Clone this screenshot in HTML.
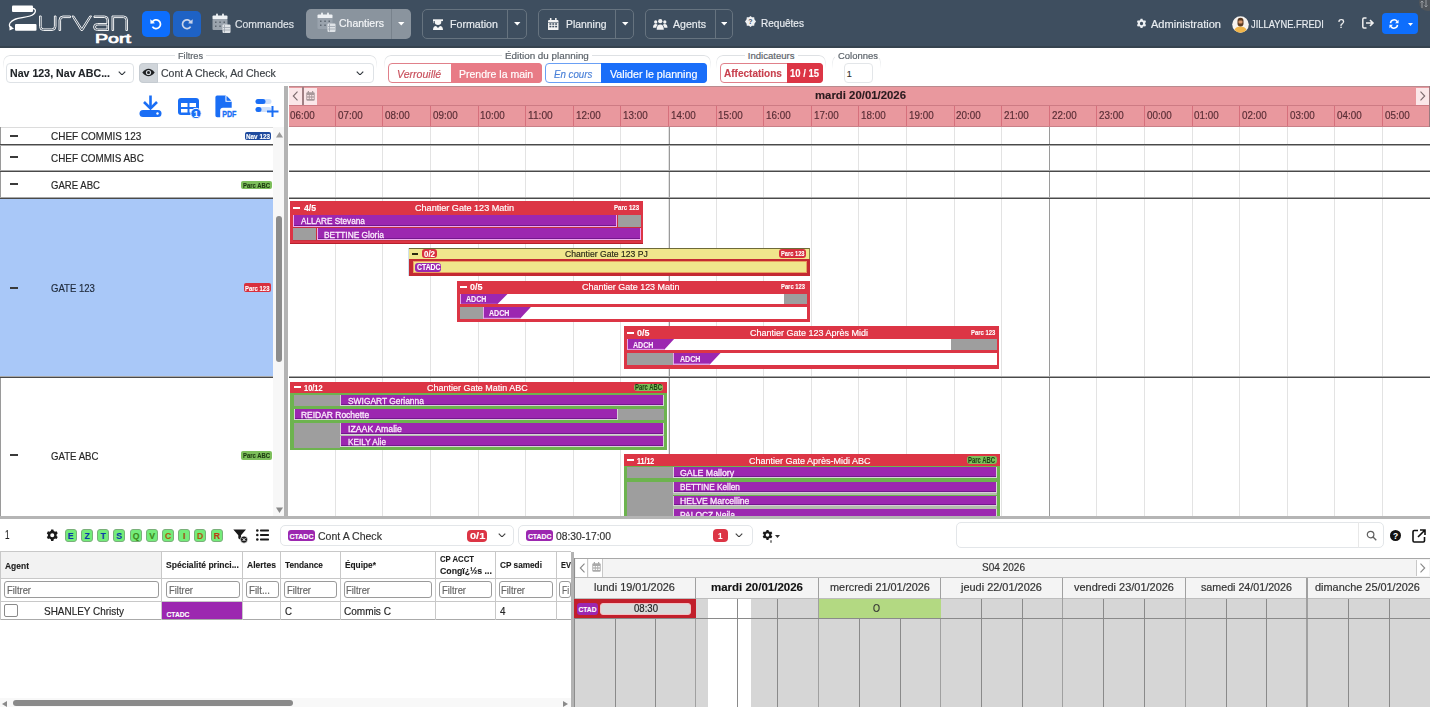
<!DOCTYPE html><html><head><meta charset="utf-8"><style>
html,body{margin:0;padding:0;width:1430px;height:707px;overflow:hidden;background:#fff;font-family:"Liberation Sans",sans-serif;}
#r{position:relative;width:1430px;height:707px;overflow:hidden;}
#r div{position:absolute;box-sizing:border-box;}
#r svg{position:absolute;}
.t{white-space:nowrap;-webkit-text-stroke:0.18px currentColor;}
</style></head><body><div id="r">
<div style="left:0px;top:0px;width:1430px;height:48px;background:#3e4e5f;"></div>
<div style="left:0px;top:46px;width:1430px;height:2px;background:#36434f;"></div>
<svg style="left:4px;top:2px" width="132" height="44" viewBox="0 0 132 44">
<rect x="8" y="3.5" width="21" height="6.5" rx="1" fill="#fff"/>
<rect x="11" y="22" width="21.5" height="6.8" rx="1" fill="#fff"/>
<path d="M29 6.5 C33 7 32 12 26 14 C18 16.5 10 15 6 21 C4.5 24 6 25.5 8 25.5" stroke="#fff" stroke-width="1.3" fill="none"/>
<path d="M5.5 23.5 L10 26.5 L5.5 28.5 Z" fill="#fff"/>
<g stroke="#fff" stroke-width="0.9" fill="none">
<path d="M35.5 14 v10.5 q0 4 4 4 h8.5 q4 0 4 -4 v-10.5 h-1.6 v10.3 q0 2.6 -2.6 2.6 h-8 q-2.6 0 -2.6 -2.6 v-10.3 z"/>
<path d="M55 28.5 v-10.5 q0 -4 4 -4 h7.5 v1.6 h-7.3 q-2.6 0 -2.6 2.6 v10.3 z"/>
<path d="M68 14 h1.8 l8 12.5 l8 -12.5 h1.8 l-9 14.5 h-1.6 z"/>
<path d="M90 14 h10.5 q4 0 4 4 v10.5 h-11 q-4 0 -4 -3.5 q0 -3.5 4 -3.5 h9.4 v-3.4 q0 -2.6 -2.6 -2.6 h-10.3 z M103 23 h-9 q-2.5 0 -2.5 2 q0 2 2.5 2 h9 z"/>
<path d="M108 28.5 v-14.5 h11.5 q4 0 4 4 v10.5 h-1.6 v-10.3 q0 -2.6 -2.6 -2.6 h-9.7 v12.9 z"/>
</g>
<text x="91" y="40.6" font-family="Liberation Sans" font-size="12.8" fill="#fff" stroke="#fff" stroke-width="0.7" textLength="36" lengthAdjust="spacingAndGlyphs">Port</text>
</svg>
<div style="left:142px;top:11px;width:28px;height:26px;background:#0d6efd;border-radius:5px;"></div>
<div style="left:173px;top:11px;width:28px;height:26px;background:#1e62c5;border-radius:5px;"></div>
<svg style="left:148px;top:16px" width="16" height="16" viewBox="0 0 16 16"><path d="M4.2 6.2 A4.4 4.4 0 1 1 4.4 10.6" stroke="#fff" stroke-width="1.7" fill="none"/><path d="M2.3 3.2 L2.5 7.8 L7 7.2 Z" fill="#fff"/></svg>
<svg style="left:179px;top:16px" width="16" height="16" viewBox="0 0 16 16"><path d="M11.8 6.2 A4.4 4.4 0 1 0 11.6 10.6" stroke="#c9d4ea" stroke-width="1.7" fill="none"/><path d="M13.7 3.2 L13.5 7.8 L9 7.2 Z" fill="#c9d4ea"/></svg>
<svg style="left:212px;top:13px" width="20" height="21" viewBox="0 0 20 21">
<rect x="4" y="0.5" width="2" height="3" rx="1" fill="#e8ecef"/><rect x="10" y="0.5" width="2" height="3" rx="1" fill="#e8ecef"/>
<rect x="0.5" y="2.5" width="15" height="4" rx="1" fill="#eef1f4"/>
<rect x="0.5" y="6" width="15" height="11" rx="1" fill="#9aa3ad"/>
<g fill="#5d6670"><rect x="3" y="8.5" width="1.5" height="1.5"/><rect x="7.3" y="8.5" width="1.5" height="1.5"/><rect x="11.5" y="8.5" width="1.5" height="1.5"/><rect x="3" y="12.5" width="1.5" height="1.5"/><rect x="7.3" y="12.5" width="1.5" height="1.5"/></g>
<rect x="10.5" y="11.5" width="8" height="8.5" rx="1" fill="#dfe3e7"/><g stroke="#9aa3ad" stroke-width="0.8"><line x1="12.5" y1="12" x2="12.5" y2="19.5"/><line x1="11" y1="14.5" x2="18" y2="14.5"/><line x1="11" y1="17" x2="18" y2="17"/></g>
</svg>
<div class="t" style="left:235px;top:18.5px;font-size:11.594px;line-height:11.594px;color:#dfe4e9;transform:scaleX(0.8977);transform-origin:0 0;">Commandes</div>
<div style="left:306px;top:9px;width:105px;height:29.5px;background:#8a949e;border-radius:5px;"></div>
<div style="left:391px;top:9px;width:1px;height:29.5px;background:#78828c;"></div>
<svg style="left:317px;top:12px" width="20" height="21" viewBox="0 0 20 21">
<rect x="4" y="0.5" width="2" height="3" rx="1" fill="#e8ecef"/><rect x="10" y="0.5" width="2" height="3" rx="1" fill="#e8ecef"/>
<rect x="0.5" y="2.5" width="15" height="4" rx="1" fill="#eef1f4"/>
<rect x="0.5" y="6" width="15" height="11" rx="1" fill="#9aa3ad"/>
<g fill="#5d6670"><rect x="3" y="8.5" width="1.5" height="1.5"/><rect x="7.3" y="8.5" width="1.5" height="1.5"/><rect x="11.5" y="8.5" width="1.5" height="1.5"/><rect x="3" y="12.5" width="1.5" height="1.5"/><rect x="7.3" y="12.5" width="1.5" height="1.5"/></g>
<rect x="10.5" y="11.5" width="8" height="8.5" rx="1" fill="#dfe3e7"/><g stroke="#9aa3ad" stroke-width="0.8"><line x1="12.5" y1="12" x2="12.5" y2="19.5"/><line x1="11" y1="14.5" x2="18" y2="14.5"/><line x1="11" y1="17" x2="18" y2="17"/></g>
</svg>
<div class="t" style="left:339px;top:18.31px;font-size:11.594px;line-height:11.594px;color:#f4f6f8;transform:scaleX(0.9069);transform-origin:0 0;">Chantiers</div>
<svg style="left:398px;top:21.5px" width="6.5" height="4" viewBox="0 0 8 5"><path d="M0 0 H8 L4 4.5 Z" fill="#fff"/></svg>
<div style="left:422px;top:9px;width:105px;height:29.5px;border:1px solid #66737f;border-radius:5px;"></div>
<div style="left:507px;top:9px;width:1px;height:29.5px;background:#66737f;"></div>
<svg style="left:432.8px;top:18.9px" width="10" height="11.5" viewBox="0 0 10 11.5"><path d="M0 0.3 H10 V2.1 H0 Z" fill="#f5f5f5"/><path d="M0.4 2 V4.2" stroke="#f5f5f5" stroke-width="0.6"/><path d="M1.8 2 v1.6 q0 2.4 3.2 2.4 q3.2 0 3.2 -2.4 V2 Z" fill="#f5f5f5"/><path d="M0 11.3 q0 -4 3 -4.2 L5 9 L7 7.1 q3 0.2 3 4.2 Z" fill="#f5f5f5"/></svg>
<div class="t" style="left:450px;top:18.81px;font-size:11.594px;line-height:11.594px;color:#e9edf1;transform:scaleX(0.9197);transform-origin:0 0;">Formation</div>
<svg style="left:514px;top:21.5px" width="6.5" height="4" viewBox="0 0 8 5"><path d="M0 0 H8 L4 4.5 Z" fill="#fff"/></svg>
<div style="left:537.7px;top:9px;width:96.3px;height:29.5px;border:1px solid #66737f;border-radius:5px;"></div>
<div style="left:615px;top:9px;width:1px;height:29.5px;background:#66737f;"></div>
<svg style="left:548px;top:18px" width="10.5" height="12.4" viewBox="0 0 11 13"><rect x="2" y="0" width="1.6" height="3" fill="#f3f3f3"/><rect x="7.4" y="0" width="1.6" height="3" fill="#f3f3f3"/><rect x="0" y="2" width="11" height="11" rx="1.2" fill="#f3f3f3"/><g fill="#3e4e5f"><rect x="1.5" y="5.5" width="2" height="1.6"/><rect x="4.5" y="5.5" width="2" height="1.6"/><rect x="7.5" y="5.5" width="2" height="1.6"/><rect x="1.5" y="8.2" width="2" height="1.6"/><rect x="4.5" y="8.2" width="2" height="1.6"/><rect x="7.5" y="8.2" width="2" height="1.6"/><rect x="0" y="4.3" width="11" height="0.6"/></g></svg>
<div class="t" style="left:565.5px;top:18.81px;font-size:11.594px;line-height:11.594px;color:#e9edf1;transform:scaleX(0.8975);transform-origin:0 0;">Planning</div>
<svg style="left:622px;top:21.5px" width="6.5" height="4" viewBox="0 0 8 5"><path d="M0 0 H8 L4 4.5 Z" fill="#fff"/></svg>
<div style="left:644.6px;top:9px;width:88.9px;height:29.5px;border:1px solid #66737f;border-radius:5px;"></div>
<div style="left:714.6px;top:9px;width:1.0px;height:29.5px;background:#66737f;"></div>
<svg style="left:653px;top:18.8px" width="14.5" height="10.8" viewBox="0 0 15 11"><g fill="#f3f3f3"><circle cx="7.5" cy="2.2" r="2.2"/><circle cx="2.8" cy="3" r="1.7"/><circle cx="12.2" cy="3" r="1.7"/><path d="M3.8 11 q0 -5.5 3.7 -5.5 q3.7 0 3.7 5.5 z"/><path d="M0 9 q0 -4 2.8 -4 q1.5 0 2 1 q-1.5 1.2 -1.5 3 z"/><path d="M15 9 q0 -4 -2.8 -4 q-1.5 0 -2 1 q1.5 1.2 1.5 3 z"/></g></svg>
<div class="t" style="left:673px;top:18.81px;font-size:11.594px;line-height:11.594px;color:#e9edf1;transform:scaleX(0.9142);transform-origin:0 0;">Agents</div>
<svg style="left:720.5px;top:21.5px" width="6.5" height="4" viewBox="0 0 8 5"><path d="M0 0 H8 L4 4.5 Z" fill="#fff"/></svg>
<svg style="left:745px;top:16px" width="11" height="11" viewBox="0 0 11 11"><path d="M5.5 0 L7 1.3 L9.2 1.3 L9.4 3.3 L11 5.5 L9.4 7.7 L9.2 9.7 L7 9.7 L5.5 11 L4 9.7 L1.8 9.7 L1.6 7.7 L0 5.5 L1.6 3.3 L1.8 1.3 L4 1.3 Z" fill="#eef0f2"/><text x="5.5" y="8.3" font-size="7" font-weight="bold" text-anchor="middle" fill="#3e4e5f" font-family="Liberation Sans">?</text></svg>
<div class="t" style="left:761.2px;top:17.5px;font-size:11.594px;line-height:11.594px;color:#e9edf1;transform:scaleX(0.8664);transform-origin:0 0;">Requêtes</div>
<svg style="left:1136px;top:18px" width="11" height="11" viewBox="0 0 16 16"><path fill="#eceff2" d="M9.4 1.1 9.9 3a5.3 5.3 0 0 1 1.5.9l1.9-.6 1.4 2.4-1.4 1.3a5.4 5.4 0 0 1 0 1.8l1.4 1.3-1.4 2.4-1.9-.6a5.3 5.3 0 0 1-1.5.9l-.5 1.9H6.6l-.5-1.9a5.3 5.3 0 0 1-1.5-.9l-1.9.6L1.3 10.1l1.4-1.3a5.4 5.4 0 0 1 0-1.8L1.3 5.7l1.4-2.4 1.9.6A5.3 5.3 0 0 1 6.1 3l.5-1.9zM8 5.6a2.4 2.4 0 1 0 0 4.8 2.4 2.4 0 0 0 0-4.8z"/></svg>
<div class="t" style="left:1151px;top:18.81px;font-size:11.304px;line-height:11.304px;color:#e9edf1;transform:scaleX(0.9774);transform-origin:0 0;">Administration</div>
<svg style="left:1232px;top:16px" width="17" height="17" viewBox="0 0 17 17"><circle cx="8.5" cy="8.5" r="8.3" fill="#f7f3ee"/><path d="M2.5 14 q1 -3.5 6 -3.5 q5 0 6 3.5 q-2.5 2.8 -6 2.8 q-3.5 0 -6 -2.8z" fill="#f0b54a"/><path d="M5.5 5 q0 -3.2 3 -3.2 q3 0 3 3.2 v2.5 q0 3 -3 3 q-3 0 -3 -3z" fill="#5a3a22"/><rect x="6.5" y="4.5" width="4" height="3" rx="1" fill="#d9986a"/></svg>
<div class="t" style="left:1251px;top:18.81px;font-size:11.304px;line-height:11.304px;color:#e9edf1;transform:scaleX(0.8261);transform-origin:0 0;">JILLAYNE.FREDI</div>
<div class="t" style="left:1338.3px;top:17.31px;font-size:13.043px;line-height:13.043px;color:#f3f3f3;transform:scaleX(0.8961);transform-origin:0 0;">?</div>
<svg style="left:1362px;top:17px" width="13" height="12" viewBox="0 0 13 12"><path d="M4.5 1 H2 q-1.2 0 -1.2 1.2 v7.6 q0 1.2 1.2 1.2 H4.5" stroke="#f0f0f0" stroke-width="1.5" fill="none"/><path d="M4 6 H10.5 M8 3 L11 6 L8 9" stroke="#f0f0f0" stroke-width="1.6" fill="none"/></svg>
<div style="left:1382px;top:13.4px;width:36px;height:20.6px;background:#0d6efd;border-radius:4px;"></div>
<svg style="left:1389px;top:19px" width="10" height="10" viewBox="0 0 12 12"><path d="M1.8 5 A4.3 4.3 0 0 1 9.8 3.2" stroke="#fff" stroke-width="1.8" fill="none"/><path d="M10.2 7 A4.3 4.3 0 0 1 2.2 8.8" stroke="#fff" stroke-width="1.8" fill="none"/><path d="M11.5 0.8 V5 H7.3 Z" fill="#fff"/><path d="M0.5 11.2 V7 H4.7 Z" fill="#fff"/></svg>
<svg style="left:1408px;top:22.5px" width="5" height="3" viewBox="0 0 5 3"><path d="M0 0 H5 L2.5 3 Z" fill="#fff"/></svg>
<svg style="left:1418px;top:0px" width="12" height="12" viewBox="0 0 12 12"><circle cx="9.5" cy="2.5" r="8.5" fill="#50555b"/><path d="M4 1 V8 M2.5 2.5 L4 1 L5.5 2.5 M8 0 V7 M6.5 5.5 L8 7 L9.5 5.5" stroke="#9a9ea3" stroke-width="1" fill="none"/></svg>
<div style="left:2.5px;top:54.5px;width:374.5px;height:14px;border:1px solid #dde0e3;border-bottom:none;border-radius:7px 7px 0 0;-webkit-mask-image:linear-gradient(#000,transparent);"></div>
<div style="left:174.6px;top:52.5px;width:31.1px;height:5.0px;background:#fff;"></div>
<div class="t" style="left:177.6px;top:50.51px;font-size:9.565px;line-height:9.565px;color:#5c636a;transform:scaleX(0.964);transform-origin:0 0;">Filtres</div>
<div style="left:384.4px;top:54.5px;width:326.6px;height:14px;border:1px solid #dde0e3;border-bottom:none;border-radius:7px 7px 0 0;-webkit-mask-image:linear-gradient(#000,transparent);"></div>
<div style="left:502px;top:52.5px;width:90px;height:5.0px;background:#fff;"></div>
<div class="t" style="left:505px;top:50.51px;font-size:9.565px;line-height:9.565px;color:#5c636a;transform:scaleX(1.0323);transform-origin:0 0;">Édition du planning</div>
<div style="left:715.7px;top:54.5px;width:110.79999999999995px;height:14px;border:1px solid #dde0e3;border-bottom:none;border-radius:7px 7px 0 0;-webkit-mask-image:linear-gradient(#000,transparent);"></div>
<div style="left:744.8px;top:52.5px;width:52.9px;height:5.0px;background:#fff;"></div>
<div class="t" style="left:747.8px;top:50.51px;font-size:9.565px;line-height:9.565px;color:#5c636a;">Indicateurs</div>
<div style="left:831.6px;top:54.5px;width:49.39999999999998px;height:14px;border:1px solid #dde0e3;border-bottom:none;border-radius:7px 7px 0 0;-webkit-mask-image:linear-gradient(#000,transparent);"></div>
<div style="left:835px;top:52.5px;width:46px;height:5.0px;background:#fff;"></div>
<div class="t" style="left:838px;top:50.51px;font-size:9.565px;line-height:9.565px;color:#5c636a;transform:scaleX(0.9898);transform-origin:0 0;">Colonnes</div>
<div style="left:6.4px;top:63px;width:127.6px;height:19.5px;border:1px solid #dee2e6;border-radius:4px;background:#fff;"></div>
<div class="t" style="left:9.5px;top:68.01px;font-size:10.58px;line-height:10.58px;color:#212529;transform:scaleX(1.0043);transform-origin:0 0;font-weight:bold;-webkit-text-stroke:0.12px currentColor;">Nav 123, Nav ABC...</div>
<svg style="left:118px;top:70.5px" width="8" height="4.8" viewBox="0 0 8 5"><path d="M0.6 0.6 L4 4 L7.4 0.6" stroke="#343a40" stroke-width="1.2" fill="none"/></svg>
<div style="left:138.7px;top:63px;width:235.3px;height:19.5px;border:1px solid #dee2e6;border-radius:4px;background:#fff;"></div>
<div style="left:138.7px;top:63px;width:19.8px;height:19.5px;background:#d0d5da;border:1px solid #c5cbd1;border-radius:4px 0 0 4px;"></div>
<svg style="left:142px;top:68px" width="13" height="9" viewBox="0 0 13 9"><path d="M0.3 4.5 Q6.5 -3 12.7 4.5 Q6.5 12 0.3 4.5Z" fill="#1d1f21"/><circle cx="6.5" cy="4.5" r="2.6" fill="#d0d5da"/><circle cx="6.5" cy="4.5" r="1.5" fill="#1d1f21"/></svg>
<div class="t" style="left:161px;top:68.01px;font-size:11.014px;line-height:11.014px;color:#3a3f44;transform:scaleX(0.9583);transform-origin:0 0;">Cont A Check, Ad Check</div>
<svg style="left:356px;top:70.5px" width="8" height="4.8" viewBox="0 0 8 5"><path d="M0.6 0.6 L4 4 L7.4 0.6" stroke="#343a40" stroke-width="1.2" fill="none"/></svg>
<div style="left:387.8px;top:63.3px;width:154.0px;height:19.5px;border:1px solid #e0808a;border-radius:4px;background:#fff;"></div>
<div style="left:450.5px;top:63.3px;width:91.3px;height:19.5px;background:#e87b86;border-radius:0 4px 4px 0;"></div>
<div class="t" style="left:397px;top:68.71px;font-size:11.014px;line-height:11.014px;color:#c9505d;transform:scaleX(0.9606);transform-origin:0 0;font-style:italic;">Verrouillé</div>
<div class="t" style="left:458.7px;top:68.71px;font-size:11.014px;line-height:11.014px;color:#fff;transform:scaleX(0.9556);transform-origin:0 0;">Prendre la main</div>
<div style="left:545px;top:63.3px;width:162px;height:19.5px;border:1px solid #6aa0f5;border-radius:4px;background:#fff;"></div>
<div style="left:601px;top:63.3px;width:106px;height:19.5px;background:#1a6ef9;border-radius:0 4px 4px 0;"></div>
<div class="t" style="left:553.9px;top:68.71px;font-size:11.014px;line-height:11.014px;color:#4a80d8;transform:scaleX(0.8835);transform-origin:0 0;font-style:italic;">En cours</div>
<div class="t" style="left:609.9px;top:68.71px;font-size:11.014px;line-height:11.014px;color:#fff;transform:scaleX(0.9743);transform-origin:0 0;">Valider le planning</div>
<div style="left:719.5px;top:63.3px;width:103.3px;height:19.5px;border:1px solid #e0808a;border-radius:4px;background:#fff;"></div>
<div style="left:786.6px;top:63.3px;width:36.2px;height:19.5px;background:#dc3545;border-radius:0 4px 4px 0;"></div>
<div class="t" style="left:723.9px;top:68.31px;font-size:10.87px;line-height:10.87px;color:#c8404e;transform:scaleX(0.9234);transform-origin:0 0;font-weight:bold;-webkit-text-stroke:0.12px currentColor;">Affectations</div>
<div class="t" style="left:790px;top:68.31px;font-size:10.58px;line-height:10.58px;color:#fff;transform:scaleX(0.8963);transform-origin:0 0;font-weight:bold;-webkit-text-stroke:0.12px currentColor;">10 / 15</div>
<div style="left:843.5px;top:63px;width:29.0px;height:19.5px;border:1px solid #e3e6e9;border-radius:4px;background:#fff;"></div>
<div class="t" style="left:846.7px;top:70.01px;font-size:8.99px;line-height:8.99px;color:#333;">1</div>
<svg style="left:139px;top:95px" width="23" height="23" viewBox="0 0 23 23"><path d="M11.5 0.5 V12" stroke="#1a6ef5" stroke-width="2.6"/><path d="M5 7 L11.5 13.5 L18 7" stroke="#1a6ef5" stroke-width="2.6" fill="none"/><rect x="0.5" y="15" width="22" height="7" rx="3.5" fill="#1a6ef5"/><circle cx="18.5" cy="18.5" r="1.2" fill="#fff"/></svg>
<svg style="left:177px;top:97px" width="25" height="22" viewBox="0 0 25 22"><rect x="1" y="1" width="21" height="17" rx="3" fill="#1a6ef5"/><g fill="#fff"><rect x="4" y="6" width="6.5" height="4"/><rect x="12.5" y="6" width="6.5" height="4"/><rect x="4" y="12" width="6.5" height="3.5"/><rect x="12.5" y="12" width="4" height="3.5"/></g><circle cx="19" cy="16.5" r="5.2" fill="#1a6ef5" stroke="#fff" stroke-width="1"/><text x="19" y="19.8" font-size="8.5" font-weight="bold" fill="#fff" text-anchor="middle" font-family="Liberation Sans">1</text></svg>
<svg style="left:215px;top:95px" width="23" height="23" viewBox="0 0 23 23"><path d="M0.4 2.2 q0-1.7 1.7-1.7 H10.8 L16.7 6.5 V12.7 H8 q-2.8 0 -2.8 2.8 V22.3 H2.1 q-1.7 0 -1.7-1.7 Z" fill="#1a6ef5"/><path d="M11 0.5 V6.3 H16.8" stroke="#fff" stroke-width="1.1" fill="none"/><path d="M11.8 1 L16.2 5.4 H11.8 Z" fill="#1a6ef5"/><text x="7.2" y="21.9" font-size="8.8" font-weight="bold" fill="#1a6ef5" stroke="#1a6ef5" stroke-width="0.35" font-family="Liberation Sans" textLength="14.2" lengthAdjust="spacingAndGlyphs">PDF</text></svg>
<svg style="left:255px;top:98px" width="25" height="20" viewBox="0 0 25 20"><rect x="0.5" y="1" width="16" height="5" rx="2.5" fill="#cfe0fb"/><rect x="0.5" y="1" width="10" height="5" rx="2.5" fill="#1a6ef5"/><rect x="0.5" y="9" width="16" height="5" rx="2.5" fill="#cfe0fb"/><rect x="0.5" y="9" width="6" height="5" rx="2.5" fill="#1a6ef5"/><path d="M17.5 8 V19 M12 13.5 H23.5" stroke="#1a6ef5" stroke-width="2"/></svg>
<div style="left:0px;top:126.5px;width:273px;height:1.0px;background:#dcdcdc;"></div>
<div style="left:0px;top:127px;width:1.2px;height:389px;background:#9a9a9a;"></div>
<div style="left:0px;top:198.5px;width:273px;height:179.0px;background:#a9c8f8;"></div>
<div style="left:0px;top:144px;width:273px;height:1px;background:#4a4a4a;"></div>
<div style="left:0px;top:145px;width:273px;height:1px;background:#a8a8a8;"></div>
<div style="left:0px;top:171px;width:273px;height:1px;background:#4a4a4a;"></div>
<div style="left:0px;top:170px;width:273px;height:1px;background:#a8a8a8;"></div>
<div style="left:0px;top:198px;width:273px;height:1px;background:#4a4a4a;"></div>
<div style="left:0px;top:197px;width:273px;height:1px;background:#a8a8a8;"></div>
<div style="left:0px;top:377px;width:273px;height:1px;background:#4a4a4a;"></div>
<div style="left:0px;top:376px;width:273px;height:1px;background:#a8a8a8;"></div>
<div style="left:10px;top:135px;width:8px;height:2px;background:#3a3a3a;"></div>
<div style="left:10px;top:156px;width:8px;height:2px;background:#3a3a3a;"></div>
<div style="left:10px;top:183px;width:8px;height:2px;background:#3a3a3a;"></div>
<div style="left:10px;top:287px;width:8px;height:2px;background:#3a3a3a;"></div>
<div style="left:10px;top:454px;width:8px;height:2px;background:#3a3a3a;"></div>
<div class="t" style="left:51px;top:130.91px;font-size:11.159px;line-height:11.159px;color:#262626;transform:scaleX(0.8944);transform-origin:0 0;">CHEF COMMIS 123</div>
<div class="t" style="left:51px;top:152.61px;font-size:11.159px;line-height:11.159px;color:#262626;transform:scaleX(0.8876);transform-origin:0 0;">CHEF COMMIS ABC</div>
<div class="t" style="left:51px;top:179.7px;font-size:11.159px;line-height:11.159px;color:#262626;transform:scaleX(0.8588);transform-origin:0 0;">GARE ABC</div>
<div class="t" style="left:51px;top:283.0px;font-size:11.159px;line-height:11.159px;color:#1f2a3a;transform:scaleX(0.8582);transform-origin:0 0;">GATE 123</div>
<div class="t" style="left:51px;top:450.5px;font-size:11.159px;line-height:11.159px;color:#262626;transform:scaleX(0.8639);transform-origin:0 0;">GATE ABC</div>
<div style="left:244.7px;top:132px;width:26.8px;height:8.2px;background:#1e4a9e;border-radius:2px;"></div>
<div class="t" style="left:246.1px;top:132.91px;font-size:8.116px;line-height:8.116px;color:#fff;transform:scaleX(0.7821);transform-origin:0 0;font-weight:bold;-webkit-text-stroke:0.12px currentColor;">Nav 123</div>
<div style="left:241px;top:180.6px;width:30.5px;height:8.7px;background:#7dbf5b;border-radius:2px;"></div>
<div class="t" style="left:242.75px;top:181.76px;font-size:8.116px;line-height:8.116px;color:#1d3a10;transform:scaleX(0.727);transform-origin:0 0;font-weight:bold;-webkit-text-stroke:0.12px currentColor;">Parc ABC</div>
<div style="left:244px;top:283.3px;width:27.3px;height:9.0px;background:#d8303d;border-radius:2px;"></div>
<div class="t" style="left:245.4px;top:284.61px;font-size:8.116px;line-height:8.116px;color:#fff;transform:scaleX(0.7336);transform-origin:0 0;font-weight:bold;-webkit-text-stroke:0.12px currentColor;">Parc 123</div>
<div style="left:241px;top:451px;width:30.5px;height:8.6px;background:#7dbf5b;border-radius:2px;"></div>
<div class="t" style="left:242.75px;top:452.11px;font-size:8.116px;line-height:8.116px;color:#1d3a10;transform:scaleX(0.727);transform-origin:0 0;font-weight:bold;-webkit-text-stroke:0.12px currentColor;">Parc ABC</div>
<div style="left:273px;top:127px;width:11px;height:389px;background:#f7f7f7;"></div>
<div style="left:276px;top:216.4px;width:6px;height:145.6px;background:#8c8c8c;border-radius:3px;"></div>
<svg style="left:275.5px;top:131.5px" width="7" height="6" viewBox="0 0 7 6"><path d="M0 5.5 L3.5 0 L7 5.5Z" fill="#9a9a9a"/></svg>
<svg style="left:275.5px;top:506.5px" width="7" height="6" viewBox="0 0 7 6"><path d="M0 0.5 L3.5 6 L7 0.5Z" fill="#8a8a8a"/></svg>
<div style="left:284.3px;top:86px;width:4.2px;height:430px;background:#b3b3b3;"></div>
<div style="left:0px;top:515.7px;width:1430px;height:3.3px;background:#b5b5b5;"></div>
<div style="left:288.5px;top:86px;width:1141.5px;height:40.5px;background:#e9989e;"></div>
<div style="left:288.5px;top:86px;width:1141.5px;height:1px;background:#b98a8e;"></div>
<div style="left:288.5px;top:105.3px;width:1141.5px;height:1.0px;background:#cd7b84;"></div>
<div style="left:288.5px;top:125.8px;width:1141.5px;height:1.0px;background:#c98088;"></div>
<div style="left:1429px;top:86px;width:1px;height:40.5px;background:#9a7a7e;"></div>
<div style="left:288.7px;top:87.7px;width:13.5px;height:17.3px;background:#fbe7e9;"></div>
<div style="left:302.2px;top:87px;width:1.6px;height:18.3px;background:#a08084;"></div>
<div style="left:303.8px;top:87.7px;width:12.9px;height:17.3px;background:#fbe7e9;"></div>
<svg style="left:292px;top:91px" width="7" height="10" viewBox="0 0 7 10"><path d="M5.5 0.7 L1.3 5 L5.5 9.3" stroke="#7a6a6c" stroke-width="1.1" fill="none"/></svg>
<svg style="left:306px;top:90.5px" width="9" height="10" viewBox="0 0 9 10"><rect x="0.3" y="1.2" width="8.4" height="8.5" rx="1.2" fill="#a8999b"/><rect x="1.8" y="0" width="1.2" height="2" fill="#a8999b"/><rect x="6" y="0" width="1.2" height="2" fill="#a8999b"/><g fill="#fbe7e9"><rect x="1.2" y="4" width="1.6" height="1.4"/><rect x="3.7" y="4" width="1.6" height="1.4"/><rect x="6.2" y="4" width="1.6" height="1.4"/><rect x="1.2" y="6.6" width="1.6" height="1.4"/><rect x="3.7" y="6.6" width="1.6" height="1.4"/><rect x="6.2" y="6.6" width="1.6" height="1.4"/></g></svg>
<div style="left:1416px;top:87.7px;width:12.5px;height:16.9px;background:#fbe7e9;"></div>
<svg style="left:1419px;top:91px" width="7" height="10" viewBox="0 0 7 10"><path d="M1.5 0.7 L5.7 5 L1.5 9.3" stroke="#7a6a6c" stroke-width="1.1" fill="none"/></svg>
<div class="t" style="left:814.7px;top:89.8px;font-size:10.725px;line-height:10.725px;color:#2a1a1e;transform:scaleX(1.0598);transform-origin:0 0;font-weight:bold;-webkit-text-stroke:0.12px currentColor;">mardi 20/01/2026</div>
<div class="t" style="left:289.9px;top:109.9px;font-size:10.58px;line-height:10.58px;color:#5a2e36;transform:scaleX(0.9329);transform-origin:0 0;">06:00</div>
<div style="left:334.70000000000005px;top:106px;width:1.2px;height:20px;background:#d6707c;"></div>
<div class="t" style="left:337.5px;top:109.9px;font-size:10.58px;line-height:10.58px;color:#5a2e36;transform:scaleX(0.9329);transform-origin:0 0;">07:00</div>
<div style="left:382.3px;top:106px;width:1.2px;height:20px;background:#d6707c;"></div>
<div class="t" style="left:385.1px;top:109.9px;font-size:10.58px;line-height:10.58px;color:#5a2e36;transform:scaleX(0.9329);transform-origin:0 0;">08:00</div>
<div style="left:429.90000000000003px;top:106px;width:1.2px;height:20px;background:#d6707c;"></div>
<div class="t" style="left:432.7px;top:109.9px;font-size:10.58px;line-height:10.58px;color:#5a2e36;transform:scaleX(0.9329);transform-origin:0 0;">09:00</div>
<div style="left:477.5px;top:106px;width:1.2px;height:20px;background:#d6707c;"></div>
<div class="t" style="left:480.3px;top:109.9px;font-size:10.58px;line-height:10.58px;color:#5a2e36;transform:scaleX(0.9329);transform-origin:0 0;">10:00</div>
<div style="left:525.1px;top:106px;width:1.2px;height:20px;background:#d6707c;"></div>
<div class="t" style="left:527.9px;top:109.9px;font-size:10.58px;line-height:10.58px;color:#5a2e36;transform:scaleX(0.9614);transform-origin:0 0;">11:00</div>
<div style="left:572.7px;top:106px;width:1.2px;height:20px;background:#d6707c;"></div>
<div class="t" style="left:575.5px;top:109.9px;font-size:10.58px;line-height:10.58px;color:#5a2e36;transform:scaleX(0.9329);transform-origin:0 0;">12:00</div>
<div style="left:620.3px;top:106px;width:1.2px;height:20px;background:#d6707c;"></div>
<div class="t" style="left:623.1px;top:109.9px;font-size:10.58px;line-height:10.58px;color:#5a2e36;transform:scaleX(0.9329);transform-origin:0 0;">13:00</div>
<div style="left:667.9000000000001px;top:106px;width:1.2px;height:20px;background:#d6707c;"></div>
<div class="t" style="left:670.7px;top:109.9px;font-size:10.58px;line-height:10.58px;color:#5a2e36;transform:scaleX(0.9329);transform-origin:0 0;">14:00</div>
<div style="left:715.5px;top:106px;width:1.2px;height:20px;background:#d6707c;"></div>
<div class="t" style="left:718.3px;top:109.9px;font-size:10.58px;line-height:10.58px;color:#5a2e36;transform:scaleX(0.9329);transform-origin:0 0;">15:00</div>
<div style="left:763.1px;top:106px;width:1.2px;height:20px;background:#d6707c;"></div>
<div class="t" style="left:765.9px;top:109.9px;font-size:10.58px;line-height:10.58px;color:#5a2e36;transform:scaleX(0.9329);transform-origin:0 0;">16:00</div>
<div style="left:810.7px;top:106px;width:1.2px;height:20px;background:#d6707c;"></div>
<div class="t" style="left:813.5px;top:109.9px;font-size:10.58px;line-height:10.58px;color:#5a2e36;transform:scaleX(0.9329);transform-origin:0 0;">17:00</div>
<div style="left:858.3000000000001px;top:106px;width:1.2px;height:20px;background:#d6707c;"></div>
<div class="t" style="left:861.1px;top:109.9px;font-size:10.58px;line-height:10.58px;color:#5a2e36;transform:scaleX(0.9329);transform-origin:0 0;">18:00</div>
<div style="left:905.9000000000001px;top:106px;width:1.2px;height:20px;background:#d6707c;"></div>
<div class="t" style="left:908.7px;top:109.9px;font-size:10.58px;line-height:10.58px;color:#5a2e36;transform:scaleX(0.9329);transform-origin:0 0;">19:00</div>
<div style="left:953.5px;top:106px;width:1.2px;height:20px;background:#d6707c;"></div>
<div class="t" style="left:956.3px;top:109.9px;font-size:10.58px;line-height:10.58px;color:#5a2e36;transform:scaleX(0.9329);transform-origin:0 0;">20:00</div>
<div style="left:1001.1px;top:106px;width:1.2px;height:20px;background:#d6707c;"></div>
<div class="t" style="left:1003.9px;top:109.9px;font-size:10.58px;line-height:10.58px;color:#5a2e36;transform:scaleX(0.9329);transform-origin:0 0;">21:00</div>
<div style="left:1048.7px;top:106px;width:1.2px;height:20px;background:#d6707c;"></div>
<div class="t" style="left:1051.5px;top:109.9px;font-size:10.58px;line-height:10.58px;color:#5a2e36;transform:scaleX(0.9329);transform-origin:0 0;">22:00</div>
<div style="left:1096.3000000000002px;top:106px;width:1.2px;height:20px;background:#d6707c;"></div>
<div class="t" style="left:1099.1px;top:109.9px;font-size:10.58px;line-height:10.58px;color:#5a2e36;transform:scaleX(0.9329);transform-origin:0 0;">23:00</div>
<div style="left:1143.9px;top:106px;width:1.2px;height:20px;background:#d6707c;"></div>
<div class="t" style="left:1146.7px;top:109.9px;font-size:10.58px;line-height:10.58px;color:#5a2e36;transform:scaleX(0.9329);transform-origin:0 0;">00:00</div>
<div style="left:1191.5px;top:106px;width:1.2px;height:20px;background:#d6707c;"></div>
<div class="t" style="left:1194.3px;top:109.9px;font-size:10.58px;line-height:10.58px;color:#5a2e36;transform:scaleX(0.9329);transform-origin:0 0;">01:00</div>
<div style="left:1239.1px;top:106px;width:1.2px;height:20px;background:#d6707c;"></div>
<div class="t" style="left:1241.9px;top:109.9px;font-size:10.58px;line-height:10.58px;color:#5a2e36;transform:scaleX(0.9329);transform-origin:0 0;">02:00</div>
<div style="left:1286.7px;top:106px;width:1.2px;height:20px;background:#d6707c;"></div>
<div class="t" style="left:1289.5px;top:109.9px;font-size:10.58px;line-height:10.58px;color:#5a2e36;transform:scaleX(0.9329);transform-origin:0 0;">03:00</div>
<div style="left:1334.3000000000002px;top:106px;width:1.2px;height:20px;background:#d6707c;"></div>
<div class="t" style="left:1337.1px;top:109.9px;font-size:10.58px;line-height:10.58px;color:#5a2e36;transform:scaleX(0.9329);transform-origin:0 0;">04:00</div>
<div style="left:1381.9px;top:106px;width:1.2px;height:20px;background:#d6707c;"></div>
<div class="t" style="left:1384.7px;top:109.9px;font-size:10.58px;line-height:10.58px;color:#5a2e36;transform:scaleX(0.9329);transform-origin:0 0;">05:00</div>
<div style="left:334.70000000000005px;top:127px;width:1.0px;height:389px;background:#e3e3e3;"></div>
<div style="left:382.3px;top:127px;width:1.0px;height:389px;background:#e3e3e3;"></div>
<div style="left:429.90000000000003px;top:127px;width:1.0px;height:389px;background:#e3e3e3;"></div>
<div style="left:477.5px;top:127px;width:1.0px;height:389px;background:#e3e3e3;"></div>
<div style="left:525.1px;top:127px;width:1.0px;height:389px;background:#e3e3e3;"></div>
<div style="left:572.7px;top:127px;width:1.0px;height:389px;background:#e3e3e3;"></div>
<div style="left:620.3px;top:127px;width:1.0px;height:389px;background:#e3e3e3;"></div>
<div style="left:667.9000000000001px;top:127px;width:1.0px;height:389px;background:#e3e3e3;"></div>
<div style="left:715.5px;top:127px;width:1.0px;height:389px;background:#e3e3e3;"></div>
<div style="left:763.1px;top:127px;width:1.0px;height:389px;background:#e3e3e3;"></div>
<div style="left:810.7px;top:127px;width:1.0px;height:389px;background:#e3e3e3;"></div>
<div style="left:858.3000000000001px;top:127px;width:1.0px;height:389px;background:#e3e3e3;"></div>
<div style="left:905.9000000000001px;top:127px;width:1.0px;height:389px;background:#e3e3e3;"></div>
<div style="left:953.5px;top:127px;width:1.0px;height:389px;background:#e3e3e3;"></div>
<div style="left:1001.1px;top:127px;width:1.0px;height:389px;background:#e3e3e3;"></div>
<div style="left:1048.7px;top:127px;width:1.0px;height:389px;background:#e3e3e3;"></div>
<div style="left:1096.3000000000002px;top:127px;width:1.0px;height:389px;background:#e3e3e3;"></div>
<div style="left:1143.9px;top:127px;width:1.0px;height:389px;background:#e3e3e3;"></div>
<div style="left:1191.5px;top:127px;width:1.0px;height:389px;background:#e3e3e3;"></div>
<div style="left:1239.1px;top:127px;width:1.0px;height:389px;background:#e3e3e3;"></div>
<div style="left:1286.7px;top:127px;width:1.0px;height:389px;background:#e3e3e3;"></div>
<div style="left:1334.3000000000002px;top:127px;width:1.0px;height:389px;background:#e3e3e3;"></div>
<div style="left:1381.9px;top:127px;width:1.0px;height:389px;background:#e3e3e3;"></div>
<div style="left:669px;top:127px;width:1px;height:389px;background:#9a9a9a;"></div>
<div style="left:1049px;top:127px;width:1px;height:389px;background:#9a9a9a;"></div>
<div style="left:288.5px;top:144px;width:1141.5px;height:1px;background:#4a4a4a;"></div>
<div style="left:288.5px;top:145px;width:1141.5px;height:1px;background:#a8a8a8;"></div>
<div style="left:288.5px;top:171px;width:1141.5px;height:1px;background:#4a4a4a;"></div>
<div style="left:288.5px;top:170px;width:1141.5px;height:1px;background:#a8a8a8;"></div>
<div style="left:288.5px;top:198px;width:1141.5px;height:1px;background:#4a4a4a;"></div>
<div style="left:288.5px;top:197px;width:1141.5px;height:1px;background:#a8a8a8;"></div>
<div style="left:288.5px;top:377px;width:1141.5px;height:1px;background:#4a4a4a;"></div>
<div style="left:288.5px;top:376px;width:1141.5px;height:1px;background:#a8a8a8;"></div>
<div style="left:290.2px;top:201.3px;width:352.8px;height:43.2px;background:#dc3545;border-bottom:1px solid #b8202c;"></div>
<div style="left:290.2px;top:201.3px;width:352.8px;height:13.6px;background:#dc3545;"></div>
<div style="left:293px;top:207px;width:7px;height:1.8px;background:#fff;"></div>
<div class="t" style="left:303.9px;top:203.81px;font-size:8.406px;line-height:8.406px;color:#fff;transform:scaleX(1.0355);transform-origin:0 0;font-weight:bold;-webkit-text-stroke:0.12px currentColor;">4/5</div>
<div class="t" style="left:414.5px;top:203.81px;font-size:9.13px;line-height:9.13px;color:#fff;transform:scaleX(0.9953);transform-origin:0 0;">Chantier Gate 123 Matin</div>
<div class="t" style="left:613.7px;top:204.2px;font-size:7.826px;line-height:7.826px;color:#fff;transform:scaleX(0.7826);transform-origin:0 0;font-weight:bold;-webkit-text-stroke:0.12px currentColor;">Parc 123</div>
<div style="left:293.4px;top:214.9px;width:347.6px;height:26.1px;background:#c8303c;"></div>
<div style="left:293.4px;top:215.1px;width:324.1px;height:11.5px;background:#9c27b0;border:1px solid #eeaaee;border-top:none;box-shadow:inset 0 -1px 0 #74188e;"></div>
<div class="t" style="left:301px;top:216.3px;font-size:9.42px;line-height:9.42px;color:#fbeefc;transform:scaleX(0.873);transform-origin:0 0;-webkit-text-stroke:0.3px #fbeefc;">ALLARE Stevana</div>
<div style="left:617.5px;top:215.1px;width:23.5px;height:11.5px;background:#9e9e9e;"></div>
<div style="left:293.4px;top:228.1px;width:23.1px;height:12.4px;background:#9e9e9e;"></div>
<div style="left:316.5px;top:228.1px;width:324.0px;height:12.4px;background:#9c27b0;border:1px solid #eeaaee;border-top:none;box-shadow:inset 0 -1px 0 #74188e;"></div>
<div class="t" style="left:324.4px;top:230.21px;font-size:9.42px;line-height:9.42px;color:#fbeefc;transform:scaleX(0.8886);transform-origin:0 0;-webkit-text-stroke:0.3px #fbeefc;">BETTINE Gloria</div>
<div style="left:408.3px;top:248px;width:1.2px;height:28.3px;background:#cfe0f0;"></div>
<div style="left:409.3px;top:248px;width:400.4px;height:28.3px;background:#c42a32;"></div>
<div style="left:409.3px;top:248px;width:400.4px;height:11.2px;background:#f0e68c;border-top:1px solid #6e6a38;border-right:1px solid #8a8640;"></div>
<div style="left:412px;top:253px;width:6px;height:1.8px;background:#2a2a10;"></div>
<div style="left:422px;top:248.6px;width:14.5px;height:9.7px;background:#d9303e;border-radius:3px;"></div>
<div class="t" style="left:424px;top:249.61px;font-size:8.406px;line-height:8.406px;color:#fff;transform:scaleX(0.9413);transform-origin:0 0;font-weight:bold;-webkit-text-stroke:0.12px currentColor;">0/2</div>
<div class="t" style="left:565.3px;top:249.91px;font-size:9.13px;line-height:9.13px;color:#2a2a18;transform:scaleX(0.9442);transform-origin:0 0;">Chantier Gate 123 PJ</div>
<div style="left:778.8px;top:249.2px;width:27.1px;height:8.6px;background:#d62f3c;border-radius:3px;"></div>
<div class="t" style="left:780.8px;top:250.31px;font-size:8.116px;line-height:8.116px;color:#fff;transform:scaleX(0.7037);transform-origin:0 0;font-weight:bold;-webkit-text-stroke:0.12px currentColor;">Parc 123</div>
<div style="left:412.7px;top:261.2px;width:394.1px;height:11.8px;background:#f0e68c;border:1px solid #e9a060;"></div>
<div style="left:415.1px;top:262.5px;width:26.3px;height:9.5px;background:#9c27b0;border-radius:3px;"></div>
<div class="t" style="left:416.6px;top:263.41px;font-size:8.696px;line-height:8.696px;color:#fff;transform:scaleX(0.7889);transform-origin:0 0;font-weight:bold;-webkit-text-stroke:0.12px currentColor;">CTADC</div>
<div style="left:457.4px;top:280.5px;width:352.3px;height:41.5px;background:#dc3545;"></div>
<div style="left:457.4px;top:280.5px;width:352.3px;height:12.4px;background:#dc3545;"></div>
<div style="left:460px;top:286px;width:7px;height:1.8px;background:#fff;"></div>
<div class="t" style="left:469.8px;top:283.0px;font-size:8.406px;line-height:8.406px;color:#fff;transform:scaleX(1.0697);transform-origin:0 0;font-weight:bold;-webkit-text-stroke:0.12px currentColor;">0/5</div>
<div class="t" style="left:581.5px;top:283.0px;font-size:9.13px;line-height:9.13px;color:#fff;transform:scaleX(0.9802);transform-origin:0 0;">Chantier Gate 123 Matin</div>
<div class="t" style="left:781px;top:283.41px;font-size:7.826px;line-height:7.826px;color:#fff;transform:scaleX(0.7453);transform-origin:0 0;font-weight:bold;-webkit-text-stroke:0.12px currentColor;">Parc 123</div>
<div style="left:460px;top:293.7px;width:346.8px;height:10.8px;background:#fff;"></div>
<svg style="left:460px;top:293.7px" width="48.5" height="10.800000000000011" viewBox="0 0 48.5 10.800000000000011" preserveAspectRatio="none"><path d="M0 0 H47.5 L36.7 10.800000000000011 H0 Z" fill="#9c27b0"/><rect x="0" y="0" width="1" height="10.800000000000011" fill="#e7a9ea"/><rect x="0" y="9.800000000000011" width="36.7" height="1" fill="#e7a9ea"/></svg>
<div class="t" style="left:466px;top:295.3px;font-size:8.696px;line-height:8.696px;color:#fbeefc;transform:scaleX(0.8161);transform-origin:0 0;font-weight:bold;-webkit-text-stroke:0.12px currentColor;">ADCH</div>
<div style="left:783.9px;top:293.7px;width:22.9px;height:10.8px;background:#9e9e9e;"></div>
<div style="left:460px;top:306.8px;width:346.8px;height:11.8px;background:#fff;"></div>
<div style="left:460px;top:306.8px;width:23px;height:11.8px;background:#9e9e9e;"></div>
<svg style="left:483px;top:306.8px" width="48.89999999999998" height="11.800000000000011" viewBox="0 0 48.89999999999998 11.800000000000011" preserveAspectRatio="none"><path d="M0 0 H47.89999999999998 L36.99999999999998 11.800000000000011 H0 Z" fill="#9c27b0"/><rect x="0" y="0" width="1" height="11.800000000000011" fill="#e7a9ea"/><rect x="0" y="10.800000000000011" width="36.99999999999998" height="1" fill="#e7a9ea"/></svg>
<div class="t" style="left:488.6px;top:309.41px;font-size:8.696px;line-height:8.696px;color:#fbeefc;transform:scaleX(0.8161);transform-origin:0 0;font-weight:bold;-webkit-text-stroke:0.12px currentColor;">ADCH</div>
<div style="left:623.9px;top:326.2px;width:375.5px;height:42.4px;background:#dc3545;"></div>
<div style="left:623.9px;top:326.2px;width:375.5px;height:12.5px;background:#dc3545;"></div>
<div style="left:627px;top:332px;width:7px;height:1.8px;background:#fff;"></div>
<div class="t" style="left:636.8px;top:328.7px;font-size:8.406px;line-height:8.406px;color:#fff;transform:scaleX(1.0611);transform-origin:0 0;font-weight:bold;-webkit-text-stroke:0.12px currentColor;">0/5</div>
<div class="t" style="left:749.8px;top:328.7px;font-size:9.13px;line-height:9.13px;color:#fff;transform:scaleX(0.9852);transform-origin:0 0;">Chantier Gate 123 Après Midi</div>
<div class="t" style="left:970.6px;top:329.11px;font-size:7.826px;line-height:7.826px;color:#fff;transform:scaleX(0.7577);transform-origin:0 0;font-weight:bold;-webkit-text-stroke:0.12px currentColor;">Parc 123</div>
<div style="left:627px;top:339.4px;width:369.5px;height:10.9px;background:#fff;"></div>
<svg style="left:627px;top:339.4px" width="48.10000000000002" height="10.900000000000034" viewBox="0 0 48.10000000000002 10.900000000000034" preserveAspectRatio="none"><path d="M0 0 H47.10000000000002 L37.00000000000002 10.900000000000034 H0 Z" fill="#9c27b0"/><rect x="0" y="0" width="1" height="10.900000000000034" fill="#e7a9ea"/><rect x="0" y="9.900000000000034" width="37.00000000000002" height="1" fill="#e7a9ea"/></svg>
<div class="t" style="left:632.8px;top:341.21px;font-size:8.696px;line-height:8.696px;color:#fbeefc;transform:scaleX(0.8161);transform-origin:0 0;font-weight:bold;-webkit-text-stroke:0.12px currentColor;">ADCH</div>
<div style="left:951px;top:339.4px;width:45.5px;height:10.9px;background:#9e9e9e;"></div>
<div style="left:627px;top:353px;width:369.5px;height:11.6px;background:#fff;"></div>
<div style="left:627px;top:353px;width:46.3px;height:11.6px;background:#9e9e9e;"></div>
<svg style="left:673.3px;top:353px" width="48.5" height="11.600000000000023" viewBox="0 0 48.5 11.600000000000023" preserveAspectRatio="none"><path d="M0 0 H47.5 L36.7 11.600000000000023 H0 Z" fill="#9c27b0"/><rect x="0" y="0" width="1" height="11.600000000000023" fill="#e7a9ea"/><rect x="0" y="10.600000000000023" width="36.7" height="1" fill="#e7a9ea"/></svg>
<div class="t" style="left:679.8px;top:355.3px;font-size:8.696px;line-height:8.696px;color:#fbeefc;transform:scaleX(0.8161);transform-origin:0 0;font-weight:bold;-webkit-text-stroke:0.12px currentColor;">ADCH</div>
<div style="left:290.4px;top:381.8px;width:376.9px;height:68.4px;background:#6db34f;"></div>
<div style="left:290.4px;top:381.8px;width:376.9px;height:10.8px;background:#dc3545;"></div>
<div style="left:294px;top:386px;width:7px;height:1.8px;background:#fff;"></div>
<div class="t" style="left:303.7px;top:384.31px;font-size:8.406px;line-height:8.406px;color:#fff;transform:scaleX(0.8842);transform-origin:0 0;font-weight:bold;-webkit-text-stroke:0.12px currentColor;">10/12</div>
<div class="t" style="left:427.4px;top:384.31px;font-size:9.13px;line-height:9.13px;color:#fff;transform:scaleX(0.9833);transform-origin:0 0;">Chantier Gate Matin ABC</div>
<div style="left:633.6px;top:383.5px;width:29.9px;height:7.4px;background:#7cc15a;border-radius:3px;"></div>
<div class="t" style="left:635.1px;top:382.61px;font-size:8.696px;line-height:8.696px;color:#1f3d12;transform:scaleX(0.676);transform-origin:0 0;font-weight:bold;-webkit-text-stroke:0.12px currentColor;">Parc ABC</div>
<div style="left:294px;top:394.8px;width:45.5px;height:11.1px;background:#9e9e9e;"></div>
<div style="left:339.5px;top:394.8px;width:324.5px;height:11.1px;background:#9c27b0;border:1px solid #d8d0d8;border-top:none;box-shadow:inset 0 -1px 0 #74188e;"></div>
<div class="t" style="left:347.8px;top:395.6px;font-size:9.42px;line-height:9.42px;color:#fbeefc;transform:scaleX(0.8943);transform-origin:0 0;-webkit-text-stroke:0.3px #fbeefc;">SWIGART Gerianna</div>
<div style="left:294px;top:409px;width:323.7px;height:11.3px;background:#9c27b0;border:1px solid #d8d0d8;border-top:none;box-shadow:inset 0 -1px 0 #74188e;"></div>
<div class="t" style="left:300.8px;top:410.01px;font-size:9.42px;line-height:9.42px;color:#fbeefc;transform:scaleX(0.8984);transform-origin:0 0;-webkit-text-stroke:0.3px #fbeefc;">REIDAR Rochette</div>
<div style="left:617.7px;top:409px;width:46.3px;height:11.3px;background:#9e9e9e;"></div>
<div style="left:294px;top:423px;width:45.5px;height:24.5px;background:#9e9e9e;"></div>
<div style="left:339.5px;top:423px;width:324.5px;height:11.5px;background:#9c27b0;border:1px solid #d8d0d8;border-top:none;box-shadow:inset 0 -1px 0 #74188e;"></div>
<div class="t" style="left:347.8px;top:424.21px;font-size:9.42px;line-height:9.42px;color:#fbeefc;transform:scaleX(0.9292);transform-origin:0 0;-webkit-text-stroke:0.3px #fbeefc;">IZAAK Amalie</div>
<div style="left:339.5px;top:434.5px;width:324.5px;height:1.7px;background:#b4bcae;"></div>
<div style="left:339.5px;top:436.2px;width:324.5px;height:11.3px;background:#9c27b0;border:1px solid #d8d0d8;border-top:none;box-shadow:inset 0 -1px 0 #74188e;"></div>
<div class="t" style="left:347.8px;top:437.21px;font-size:9.42px;line-height:9.42px;color:#fbeefc;transform:scaleX(0.8707);transform-origin:0 0;-webkit-text-stroke:0.3px #fbeefc;">KEILY Alie</div>
<div style="left:623.9px;top:454.2px;width:376.1px;height:61.8px;background:#6db34f;"></div>
<div style="left:623.9px;top:454.2px;width:376.1px;height:11.7px;background:#dc3545;"></div>
<div style="left:627px;top:459px;width:7px;height:1.8px;background:#fff;"></div>
<div class="t" style="left:637.3px;top:456.7px;font-size:8.406px;line-height:8.406px;color:#fff;transform:scaleX(0.841);transform-origin:0 0;font-weight:bold;-webkit-text-stroke:0.12px currentColor;">11/12</div>
<div class="t" style="left:749.2px;top:456.7px;font-size:9.13px;line-height:9.13px;color:#fff;transform:scaleX(0.9861);transform-origin:0 0;">Chantier Gate Après-Midi ABC</div>
<div style="left:966.5px;top:456px;width:30.0px;height:7.8px;background:#7cc15a;border-radius:3px;"></div>
<div class="t" style="left:968.0px;top:455.52px;font-size:8.696px;line-height:8.696px;color:#1f3d12;transform:scaleX(0.6786);transform-origin:0 0;font-weight:bold;-webkit-text-stroke:0.12px currentColor;">Parc ABC</div>
<div style="left:627px;top:467.3px;width:46px;height:11.0px;background:#9e9e9e;"></div>
<div style="left:627px;top:481.7px;width:46px;height:34.3px;background:#9e9e9e;"></div>
<div style="left:673px;top:467.3px;width:324px;height:11.0px;background:#9c27b0;border:1px solid #d8d0d8;border-top:none;box-shadow:inset 0 -1px 0 #74188e;"></div>
<div class="t" style="left:680.3px;top:468.01px;font-size:9.42px;line-height:9.42px;color:#fbeefc;transform:scaleX(0.9328);transform-origin:0 0;-webkit-text-stroke:0.3px #fbeefc;">GALE Mallory</div>
<div style="left:673px;top:481.7px;width:324px;height:11.0px;background:#9c27b0;border:1px solid #d8d0d8;border-top:none;box-shadow:inset 0 -1px 0 #74188e;"></div>
<div class="t" style="left:680.3px;top:482.41px;font-size:9.42px;line-height:9.42px;color:#fbeefc;transform:scaleX(0.8749);transform-origin:0 0;-webkit-text-stroke:0.3px #fbeefc;">BETTINE Kellen</div>
<div style="left:673px;top:492.7px;width:324px;height:2.8px;background:#b4bcae;"></div>
<div style="left:673px;top:495.5px;width:324px;height:10.7px;background:#9c27b0;border:1px solid #d8d0d8;border-top:none;box-shadow:inset 0 -1px 0 #74188e;"></div>
<div class="t" style="left:680.3px;top:495.91px;font-size:9.42px;line-height:9.42px;color:#fbeefc;transform:scaleX(0.9176);transform-origin:0 0;-webkit-text-stroke:0.3px #fbeefc;">HELVE Marcelline</div>
<div style="left:673px;top:506.2px;width:324px;height:2.8px;background:#b4bcae;"></div>
<div style="left:673px;top:509px;width:324px;height:11px;background:#9c27b0;border:1px solid #d8d0d8;border-top:none;box-shadow:inset 0 -1px 0 #74188e;"></div>
<div class="t" style="left:680.3px;top:509.71px;font-size:9.42px;line-height:9.42px;color:#fbeefc;transform:scaleX(0.9005);transform-origin:0 0;-webkit-text-stroke:0.3px #fbeefc;">PALOCZ Neila</div>
<div style="left:0px;top:515.7px;width:1430px;height:3.3px;background:#b5b5b5;"></div>
<div style="left:0px;top:519px;width:1430px;height:188px;background:#fff;"></div>
<div class="t" style="left:5px;top:530.41px;font-size:11.884px;line-height:11.884px;color:#222;transform:scaleX(0.6809);transform-origin:0 0;">1</div>
<svg style="left:45.5px;top:528.5px" width="12.5" height="12.5" viewBox="0 0 16 16"><path fill="#1a1a1a" d="M9.4 .6 9.9 2.6a5.6 5.6 0 0 1 1.6.95l2-.6 1.5 2.6-1.5 1.4a5.6 5.6 0 0 1 0 1.9l1.5 1.4-1.5 2.6-2-.6a5.6 5.6 0 0 1-1.6.95l-.5 2H6.6l-.5-2a5.6 5.6 0 0 1-1.6-.95l-2 .6L1 10.3l1.5-1.4a5.6 5.6 0 0 1 0-1.9L1 5.6l1.5-2.6 2 .6A5.6 5.6 0 0 1 6.1 2.6l.5-2zM8 5.4a2.6 2.6 0 1 0 0 5.2 2.6 2.6 0 0 0 0-5.2z"/></svg>
<div style="left:64.5px;top:529px;width:12.3px;height:12.8px;background:#74ec7a;border:1px solid #7ab07a;border-radius:3px;"></div>
<div class="t" style="left:67.75px;top:531.61px;font-size:8.696px;line-height:8.696px;color:#0a3aa8;font-weight:bold;-webkit-text-stroke:0.12px currentColor;">E</div>
<div style="left:81px;top:529px;width:12.3px;height:12.8px;background:#74ec7a;border:1px solid #7ab07a;border-radius:3px;"></div>
<div class="t" style="left:84.49px;top:531.61px;font-size:8.696px;line-height:8.696px;color:#0a3aa8;font-weight:bold;-webkit-text-stroke:0.12px currentColor;">Z</div>
<div style="left:97px;top:529px;width:12.3px;height:12.8px;background:#74ec7a;border:1px solid #7ab07a;border-radius:3px;"></div>
<div class="t" style="left:100.49px;top:531.61px;font-size:8.696px;line-height:8.696px;color:#0a3aa8;font-weight:bold;-webkit-text-stroke:0.12px currentColor;">T</div>
<div style="left:113px;top:529px;width:12.3px;height:12.8px;background:#74ec7a;border:1px solid #7ab07a;border-radius:3px;"></div>
<div class="t" style="left:116.25px;top:531.61px;font-size:8.696px;line-height:8.696px;color:#0a3aa8;font-weight:bold;-webkit-text-stroke:0.12px currentColor;">S</div>
<div style="left:130px;top:529px;width:12.3px;height:12.8px;background:#74ec7a;border:1px solid #7ab07a;border-radius:3px;"></div>
<div class="t" style="left:132.77px;top:531.61px;font-size:8.696px;line-height:8.696px;color:#3d8a1c;font-weight:bold;-webkit-text-stroke:0.12px currentColor;">Q</div>
<div style="left:146px;top:529px;width:12.3px;height:12.8px;background:#74ec7a;border:1px solid #7ab07a;border-radius:3px;"></div>
<div class="t" style="left:149.25px;top:531.61px;font-size:8.696px;line-height:8.696px;color:#3d8a1c;font-weight:bold;-webkit-text-stroke:0.12px currentColor;">V</div>
<div style="left:162px;top:529px;width:12.3px;height:12.8px;background:#74ec7a;border:1px solid #7ab07a;border-radius:3px;"></div>
<div class="t" style="left:165.01px;top:531.61px;font-size:8.696px;line-height:8.696px;color:#b05a10;font-weight:bold;-webkit-text-stroke:0.12px currentColor;">C</div>
<div style="left:178px;top:529px;width:12.3px;height:12.8px;background:#74ec7a;border:1px solid #7ab07a;border-radius:3px;"></div>
<div class="t" style="left:182.94px;top:531.61px;font-size:8.696px;line-height:8.696px;color:#a04a10;font-weight:bold;-webkit-text-stroke:0.12px currentColor;">I</div>
<div style="left:194px;top:529px;width:12.3px;height:12.8px;background:#74ec7a;border:1px solid #7ab07a;border-radius:3px;"></div>
<div class="t" style="left:197.01px;top:531.61px;font-size:8.696px;line-height:8.696px;color:#b05a10;font-weight:bold;-webkit-text-stroke:0.12px currentColor;">D</div>
<div style="left:210.8px;top:529px;width:12.3px;height:12.8px;background:#74ec7a;border:1px solid #7ab07a;border-radius:3px;"></div>
<div class="t" style="left:213.81px;top:531.61px;font-size:8.696px;line-height:8.696px;color:#c03a10;font-weight:bold;-webkit-text-stroke:0.12px currentColor;">R</div>
<svg style="left:232.5px;top:528.5px" width="15" height="15" viewBox="0 0 15 15"><path d="M0.3 0.5 H13 L8 6.3 V11.2 L5.3 9.3 V6.3 Z" fill="#1a1a1a"/><circle cx="11" cy="10.6" r="3.6" fill="#1a1a1a" stroke="#fff" stroke-width="0.7"/><path d="M9.6 9.2 L12.4 12 M12.4 9.2 L9.6 12" stroke="#fff" stroke-width="1"/></svg>
<svg style="left:256px;top:529px" width="13" height="12" viewBox="0 0 13 12"><g fill="#1a1a1a"><circle cx="1.3" cy="1.5" r="1.3"/><circle cx="1.3" cy="6" r="1.3"/><circle cx="1.3" cy="10.5" r="1.3"/><rect x="4" y="0.6" width="9" height="1.8" rx="0.6"/><rect x="4" y="5.1" width="9" height="1.8" rx="0.6"/><rect x="4" y="9.6" width="9" height="1.8" rx="0.6"/></g></svg>
<div style="left:279.7px;top:524.5px;width:234.3px;height:21.0px;border:1px solid #e3e6e9;border-radius:5px;background:#fff;"></div>
<div style="left:288px;top:530px;width:27px;height:11px;background:#9c27b0;border-radius:3px;"></div>
<div class="t" style="left:289.5px;top:532.9px;font-size:7.007px;line-height:7.007px;color:#fff;font-weight:bold;-webkit-text-stroke:0.12px currentColor;">CTADC</div>
<div class="t" style="left:318px;top:531.01px;font-size:11.014px;line-height:11.014px;color:#333;transform:scaleX(0.959);transform-origin:0 0;">Cont A Check</div>
<div style="left:466.8px;top:529.6px;width:20.7px;height:12.0px;background:#dc3545;border-radius:4px;"></div>
<div class="t" style="left:469.5px;top:530.81px;font-size:9.855px;line-height:9.855px;color:#fff;transform:scaleX(1.1168);transform-origin:0 0;font-weight:bold;-webkit-text-stroke:0.12px currentColor;">0/1</div>
<svg style="left:497.5px;top:532.5px" width="8" height="4.8" viewBox="0 0 8 5"><path d="M0.6 0.6 L4 4 L7.4 0.6" stroke="#444" stroke-width="1.2" fill="none"/></svg>
<div style="left:517.6px;top:524.5px;width:235.0px;height:21.0px;border:1px solid #e3e6e9;border-radius:5px;background:#fff;"></div>
<div style="left:526.4px;top:530px;width:26.6px;height:11px;background:#9c27b0;border-radius:3px;"></div>
<div class="t" style="left:527.9px;top:533.91px;font-size:6.89px;line-height:6.89px;color:#fff;font-weight:bold;-webkit-text-stroke:0.12px currentColor;">CTADC</div>
<div class="t" style="left:556px;top:531.01px;font-size:10.58px;line-height:10.58px;color:#333;transform:scaleX(0.9739);transform-origin:0 0;">08:30-17:00</div>
<div style="left:713px;top:528.5px;width:15px;height:13.5px;background:#dc3545;border-radius:4px;"></div>
<div class="t" style="left:718.3px;top:530.81px;font-size:9.855px;line-height:9.855px;color:#fff;transform:scaleX(0.821);transform-origin:0 0;font-weight:bold;-webkit-text-stroke:0.12px currentColor;">1</div>
<svg style="left:735.3px;top:532.5px" width="8" height="4.8" viewBox="0 0 8 5"><path d="M0.6 0.6 L4 4 L7.4 0.6" stroke="#444" stroke-width="1.2" fill="none"/></svg>
<svg style="left:762px;top:529px" width="11" height="12" viewBox="0 0 16 16"><path fill="#1a1a1a" d="M9.4 .6 9.9 2.6a5.6 5.6 0 0 1 1.6.95l2-.6 1.5 2.6-1.5 1.4a5.6 5.6 0 0 1 0 1.9l1.5 1.4-1.5 2.6-2-.6a5.6 5.6 0 0 1-1.6.95l-.5 2H6.6l-.5-2a5.6 5.6 0 0 1-1.6-.95l-2 .6L1 10.3l1.5-1.4a5.6 5.6 0 0 1 0-1.9L1 5.6l1.5-2.6 2 .6A5.6 5.6 0 0 1 6.1 2.6l.5-2zM8 5.4a2.6 2.6 0 1 0 0 5.2 2.6 2.6 0 0 0 0-5.2z"/></svg>
<div style="left:769.5px;top:540px;width:2.5px;height:2.5px;background:#888;border-radius:2px;"></div>
<svg style="left:775px;top:535px" width="5" height="3" viewBox="0 0 5 3"><path d="M0 0 H5 L2.5 3 Z" fill="#333"/></svg>
<div style="left:955.6px;top:522.3px;width:428.4px;height:25.7px;border:1px solid #e3e6e9;border-radius:5px;background:#fff;"></div>
<div style="left:1357.7px;top:522.3px;width:1.0px;height:25.7px;background:#e8e8e8;"></div>
<svg style="left:1366px;top:530px" width="12" height="12" viewBox="0 0 12 12"><circle cx="4.6" cy="4.6" r="3.3" stroke="#606060" stroke-width="1.2" fill="none"/><path d="M7 7 L10.3 10.3" stroke="#606060" stroke-width="1.3"/></svg>
<svg style="left:1390px;top:530px" width="11" height="11" viewBox="0 0 11 11"><circle cx="5.5" cy="5.5" r="5.5" fill="#111"/><text x="5.5" y="8.8" font-size="8.5" font-weight="bold" text-anchor="middle" fill="#fff" font-family="Liberation Sans">?</text></svg>
<svg style="left:1412px;top:529px" width="14" height="14" viewBox="0 0 14 14"><path d="M6 1.5 H2.2 q-1.2 0 -1.2 1.2 v9.1 q0 1.2 1.2 1.2 h9.1 q1.2 0 1.2 -1.2 V8" stroke="#111" stroke-width="1.6" fill="none"/><path d="M6 8 L12.5 1.5 M8 1 H13 V6" stroke="#111" stroke-width="1.6" fill="none"/></svg>
<div style="left:1px;top:551.6px;width:160.7px;height:26.6px;background:#f2f2f2;"></div>
<div style="left:0px;top:551.1px;width:571px;height:1.0px;background:#c8c8c8;"></div>
<div style="left:0px;top:577.7px;width:571px;height:1.0px;background:#c8c8c8;"></div>
<div style="left:0px;top:600.5px;width:571px;height:1.0px;background:#c8c8c8;"></div>
<div style="left:0px;top:618.8px;width:571px;height:1.2px;background:#aaa;"></div>
<div style="left:0px;top:551.6px;width:1px;height:68.4px;background:#c8c8c8;"></div>
<div style="left:161.2px;top:551.6px;width:1.2px;height:68.4px;background:#c8c8c8;"></div>
<div style="left:241.8px;top:551.6px;width:1.2px;height:68.4px;background:#c8c8c8;"></div>
<div style="left:280.0px;top:551.6px;width:1.2px;height:68.4px;background:#c8c8c8;"></div>
<div style="left:340.2px;top:551.6px;width:1.2px;height:68.4px;background:#c8c8c8;"></div>
<div style="left:435.0px;top:551.6px;width:1.2px;height:68.4px;background:#c8c8c8;"></div>
<div style="left:495.2px;top:551.6px;width:1.2px;height:68.4px;background:#c8c8c8;"></div>
<div style="left:556.3px;top:551.6px;width:1.2px;height:68.4px;background:#c8c8c8;"></div>
<div class="t" style="left:5px;top:561.61px;font-size:8.986px;line-height:8.986px;color:#1c1c1c;transform:scaleX(0.9427);transform-origin:0 0;font-weight:bold;-webkit-text-stroke:0.12px currentColor;">Agent</div>
<div class="t" style="left:166px;top:561.41px;font-size:8.986px;line-height:8.986px;color:#1c1c1c;transform:scaleX(0.9554);transform-origin:0 0;font-weight:bold;-webkit-text-stroke:0.12px currentColor;">Spécialité princi...</div>
<div class="t" style="left:247px;top:561.41px;font-size:8.986px;line-height:8.986px;color:#1c1c1c;transform:scaleX(0.9518);transform-origin:0 0;font-weight:bold;-webkit-text-stroke:0.12px currentColor;">Alertes</div>
<div class="t" style="left:285px;top:561.41px;font-size:8.986px;line-height:8.986px;color:#1c1c1c;transform:scaleX(0.9205);transform-origin:0 0;font-weight:bold;-webkit-text-stroke:0.12px currentColor;">Tendance</div>
<div class="t" style="left:345px;top:561.41px;font-size:8.986px;line-height:8.986px;color:#1c1c1c;transform:scaleX(0.9267);transform-origin:0 0;font-weight:bold;-webkit-text-stroke:0.12px currentColor;">Équipe*</div>
<div class="t" style="left:439.5px;top:554.61px;font-size:8.986px;line-height:8.986px;color:#1c1c1c;transform:scaleX(0.862);transform-origin:0 0;font-weight:bold;-webkit-text-stroke:0.12px currentColor;">CP ACCT</div>
<div class="t" style="left:439.5px;top:567.01px;font-size:8.986px;line-height:8.986px;color:#1c1c1c;transform:scaleX(0.9734);transform-origin:0 0;font-weight:bold;-webkit-text-stroke:0.12px currentColor;">Congï¿½s ...</div>
<div class="t" style="left:500px;top:561.21px;font-size:8.986px;line-height:8.986px;color:#1c1c1c;transform:scaleX(0.9173);transform-origin:0 0;font-weight:bold;-webkit-text-stroke:0.12px currentColor;">CP samedi</div>
<div class="t" style="left:561px;top:561.41px;font-size:8.986px;line-height:8.986px;color:#1c1c1c;transform:scaleX(0.8342);transform-origin:0 0;font-weight:bold;-webkit-text-stroke:0.12px currentColor;">EV</div>
<div style="left:4px;top:581.4px;width:154.5px;height:16.9px;border:1px solid #9a9a9a;border-radius:3px;background:#fff;"></div>
<div class="t" style="left:6.8px;top:585.8px;font-size:10.435px;line-height:10.435px;color:#666;transform:scaleX(0.9001);transform-origin:0 0;">Filtrer</div>
<div style="left:166px;top:581.4px;width:73.6px;height:16.9px;border:1px solid #9a9a9a;border-radius:3px;background:#fff;"></div>
<div class="t" style="left:168.8px;top:585.8px;font-size:10.435px;line-height:10.435px;color:#666;transform:scaleX(0.9001);transform-origin:0 0;">Filtrer</div>
<div style="left:246px;top:581.4px;width:33px;height:16.9px;border:1px solid #9a9a9a;border-radius:3px;background:#fff;"></div>
<div class="t" style="left:248.8px;top:585.8px;font-size:10.435px;line-height:10.435px;color:#666;transform:scaleX(0.9289);transform-origin:0 0;">Filt...</div>
<div style="left:284px;top:581.4px;width:52.5px;height:16.9px;border:1px solid #9a9a9a;border-radius:3px;background:#fff;"></div>
<div class="t" style="left:286.8px;top:585.8px;font-size:10.435px;line-height:10.435px;color:#666;transform:scaleX(0.9001);transform-origin:0 0;">Filtrer</div>
<div style="left:343.5px;top:581.4px;width:88.0px;height:16.9px;border:1px solid #9a9a9a;border-radius:3px;background:#fff;"></div>
<div class="t" style="left:346.3px;top:585.8px;font-size:10.435px;line-height:10.435px;color:#666;transform:scaleX(0.9001);transform-origin:0 0;">Filtrer</div>
<div style="left:439px;top:581.4px;width:53px;height:16.9px;border:1px solid #9a9a9a;border-radius:3px;background:#fff;"></div>
<div class="t" style="left:441.8px;top:585.8px;font-size:10.435px;line-height:10.435px;color:#666;transform:scaleX(0.9001);transform-origin:0 0;">Filtrer</div>
<div style="left:498.5px;top:581.4px;width:54.1px;height:16.9px;border:1px solid #9a9a9a;border-radius:3px;background:#fff;"></div>
<div class="t" style="left:501.3px;top:585.8px;font-size:10.435px;line-height:10.435px;color:#666;transform:scaleX(0.9001);transform-origin:0 0;">Filtrer</div>
<div style="left:559px;top:581.4px;width:12px;height:16.9px;border:1px solid #9a9a9a;border-radius:3px;background:#fff;"></div>
<div class="t" style="left:561.8px;top:585.8px;font-size:10.435px;line-height:10.435px;color:#666;transform:scaleX(0.8053);transform-origin:0 0;">Fi</div>
<div style="left:1px;top:601.5px;width:570px;height:105.5px;background:transparent;"></div>
<div style="left:4px;top:604px;width:13.5px;height:13.3px;border:1px solid #8a8a8a;border-radius:2px;background:#fff;"></div>
<div class="t" style="left:44px;top:605.8px;font-size:10.725px;line-height:10.725px;color:#262626;transform:scaleX(0.9278);transform-origin:0 0;">SHANLEY Christy</div>
<div style="left:162.2px;top:601.5px;width:79.8px;height:17.5px;background:#9c27b0;"></div>
<div class="t" style="left:166.5px;top:612.01px;font-size:6.715px;line-height:6.715px;color:#fff;font-weight:bold;-webkit-text-stroke:0.12px currentColor;">CTADC</div>
<div class="t" style="left:284.5px;top:605.51px;font-size:10.725px;line-height:10.725px;color:#262626;transform:scaleX(0.9038);transform-origin:0 0;">C</div>
<div class="t" style="left:343.5px;top:605.51px;font-size:10.725px;line-height:10.725px;color:#262626;transform:scaleX(0.9391);transform-origin:0 0;">Commis C</div>
<div class="t" style="left:500px;top:606.51px;font-size:10.435px;line-height:10.435px;color:#262626;transform:scaleX(0.9477);transform-origin:0 0;">4</div>
<div style="left:0px;top:697.6px;width:571px;height:9.4px;background:#f8f8f8;"></div>
<div style="left:13px;top:700px;width:280px;height:5.6px;background:#8a8a8a;border-radius:3px;"></div>
<svg style="left:2px;top:700.5px" width="5" height="6" viewBox="0 0 5 6"><path d="M5 0 L0 3 L5 6Z" fill="#8a8a8a"/></svg>
<svg style="left:563px;top:700.5px" width="5" height="6" viewBox="0 0 5 6"><path d="M0 0 L5 3 L0 6Z" fill="#8a8a8a"/></svg>
<div style="left:571px;top:552px;width:3px;height:155px;background:#b3b3b3;"></div>
<div style="left:574px;top:557.5px;width:856px;height:149.5px;background:#d6d6d6;"></div>
<div style="left:574px;top:557.5px;width:856px;height:1.0px;background:#a8a8a8;"></div>
<div style="left:574px;top:557.5px;width:1.2px;height:149.5px;background:#8e8e8e;"></div>
<div style="left:575.2px;top:558.5px;width:854.8px;height:18.7px;background:#f4f4f4;"></div>
<div style="left:575.5px;top:559px;width:12.5px;height:17.5px;background:#fff;border-right:1px solid #c8c8c8;"></div>
<div style="left:589px;top:559px;width:13.5px;height:17.5px;background:#fff;border-right:1px solid #c8c8c8;"></div>
<svg style="left:578.5px;top:563px" width="7" height="10" viewBox="0 0 7 10"><path d="M5.5 0.7 L1.3 5 L5.5 9.3" stroke="#888" stroke-width="1.1" fill="none"/></svg>
<svg style="left:591.5px;top:562px" width="9" height="10" viewBox="0 0 9 10"><rect x="0.3" y="1.2" width="8.4" height="8.5" rx="1.2" fill="#aaa"/><rect x="1.8" y="0" width="1.2" height="2" fill="#aaa"/><rect x="6" y="0" width="1.2" height="2" fill="#aaa"/><g fill="#fff"><rect x="1.2" y="4" width="1.6" height="1.4"/><rect x="3.7" y="4" width="1.6" height="1.4"/><rect x="6.2" y="4" width="1.6" height="1.4"/><rect x="1.2" y="6.6" width="1.6" height="1.4"/><rect x="3.7" y="6.6" width="1.6" height="1.4"/><rect x="6.2" y="6.6" width="1.6" height="1.4"/></g></svg>
<div class="t" style="left:982px;top:562.81px;font-size:10.29px;line-height:10.29px;color:#333;transform:scaleX(0.976);transform-origin:0 0;">S04 2026</div>
<div style="left:1416px;top:559.6px;width:12.5px;height:16.9px;background:#fff;border-left:1px solid #c8c8c8;"></div>
<svg style="left:1419px;top:563px" width="7" height="10" viewBox="0 0 7 10"><path d="M1.5 0.7 L5.7 5 L1.5 9.3" stroke="#888" stroke-width="1.1" fill="none"/></svg>
<div style="left:575.2px;top:576.7px;width:854.8px;height:1.0px;background:#b8b8b8;"></div>
<div style="left:575.2px;top:577.7px;width:854.8px;height:20.6px;background:#f4f4f4;"></div>
<div style="left:575.2px;top:597.8px;width:854.8px;height:1.2px;background:#bdbdbd;"></div>
<div class="t" style="left:594.25px;top:583.31px;font-size:10.29px;line-height:10.29px;color:#333;transform:scaleX(1.0644);transform-origin:0 0;">lundi 19/01/2026</div>
<div style="left:694.7px;top:577.7px;width:1.6px;height:129.3px;background:#a0a0a0;"></div>
<div class="t" style="left:711.0px;top:583.31px;font-size:10.29px;line-height:10.29px;color:#111;transform:scaleX(1.1168);transform-origin:0 0;font-weight:bold;-webkit-text-stroke:0.12px currentColor;">mardi 20/01/2026</div>
<div style="left:817.7px;top:577.7px;width:1.6px;height:129.3px;background:#a0a0a0;"></div>
<div class="t" style="left:829.55px;top:583.31px;font-size:10.29px;line-height:10.29px;color:#333;transform:scaleX(1.0595);transform-origin:0 0;">mercredi 21/01/2026</div>
<div style="left:939.8000000000001px;top:577.7px;width:1.6px;height:129.3px;background:#a0a0a0;"></div>
<div class="t" style="left:960.95px;top:583.31px;font-size:10.29px;line-height:10.29px;color:#333;transform:scaleX(1.0644);transform-origin:0 0;">jeudi 22/01/2026</div>
<div style="left:1061.5px;top:577.7px;width:1.6px;height:129.3px;background:#a0a0a0;"></div>
<div class="t" style="left:1073.85px;top:583.31px;font-size:10.29px;line-height:10.29px;color:#333;transform:scaleX(1.0657);transform-origin:0 0;">vendredi 23/01/2026</div>
<div style="left:1184.6000000000001px;top:577.7px;width:1.6px;height:129.3px;background:#a0a0a0;"></div>
<div class="t" style="left:1200.7px;top:583.31px;font-size:10.29px;line-height:10.29px;color:#333;transform:scaleX(1.0396);transform-origin:0 0;">samedi 24/01/2026</div>
<div style="left:1306.2px;top:577.7px;width:1.6px;height:129.3px;background:#a0a0a0;"></div>
<div class="t" style="left:1315.25px;top:583.31px;font-size:10.29px;line-height:10.29px;color:#333;transform:scaleX(1.0609);transform-origin:0 0;">dimanche 25/01/2026</div>
<div style="left:615px;top:599px;width:1px;height:108px;background:#8a8a8a;"></div>
<div style="left:655px;top:599px;width:1px;height:108px;background:#8a8a8a;"></div>
<div style="left:737px;top:599px;width:1px;height:108px;background:#8a8a8a;"></div>
<div style="left:777px;top:599px;width:1px;height:108px;background:#8a8a8a;"></div>
<div style="left:859px;top:599px;width:1px;height:108px;background:#8a8a8a;"></div>
<div style="left:900px;top:599px;width:1px;height:108px;background:#8a8a8a;"></div>
<div style="left:981px;top:599px;width:1px;height:108px;background:#8a8a8a;"></div>
<div style="left:1022px;top:599px;width:1px;height:108px;background:#8a8a8a;"></div>
<div style="left:1103px;top:599px;width:1px;height:108px;background:#8a8a8a;"></div>
<div style="left:1144px;top:599px;width:1px;height:108px;background:#8a8a8a;"></div>
<div style="left:1226px;top:599px;width:1px;height:108px;background:#8a8a8a;"></div>
<div style="left:1266px;top:599px;width:1px;height:108px;background:#8a8a8a;"></div>
<div style="left:1348px;top:599px;width:1px;height:108px;background:#8a8a8a;"></div>
<div style="left:1389px;top:599px;width:1px;height:108px;background:#8a8a8a;"></div>
<div style="left:708px;top:599px;width:29px;height:108px;background:#fff;"></div>
<div style="left:737.8px;top:599px;width:13.2px;height:108px;background:#fff;"></div>
<div style="left:736.7px;top:599px;width:1.2px;height:108px;background:#8a8a8a;"></div>
<div style="left:0px;top:0px;width:0px;height:0px;"></div>
<div style="left:574px;top:617.6px;width:856px;height:1.2px;background:#8a8a8a;"></div>
<div style="left:574px;top:599.3px;width:121.5px;height:18.4px;background:#c21f2b;"></div>
<div style="left:577px;top:602.5px;width:20.6px;height:12.2px;background:#9c27b0;border-radius:3px;"></div>
<div class="t" style="left:578.5px;top:607.0px;font-size:6.659px;line-height:6.659px;color:#fff;font-weight:bold;-webkit-text-stroke:0.12px currentColor;">CTAD</div>
<div style="left:600.3px;top:602.6px;width:90.7px;height:12.4px;background:#dadada;border:1px solid #f3c0c4;border-radius:3px;"></div>
<div class="t" style="left:633.65px;top:604.31px;font-size:10.145px;line-height:10.145px;color:#222;transform:scaleX(0.9454);transform-origin:0 0;">08:30</div>
<div style="left:818.8px;top:599.3px;width:121.8px;height:18.3px;background:#b3d982;"></div>
<div class="t" style="left:873.0px;top:603.3px;font-size:10.725px;line-height:10.725px;color:#333;transform:scaleX(0.8391);transform-origin:0 0;">O</div></div></body></html>
